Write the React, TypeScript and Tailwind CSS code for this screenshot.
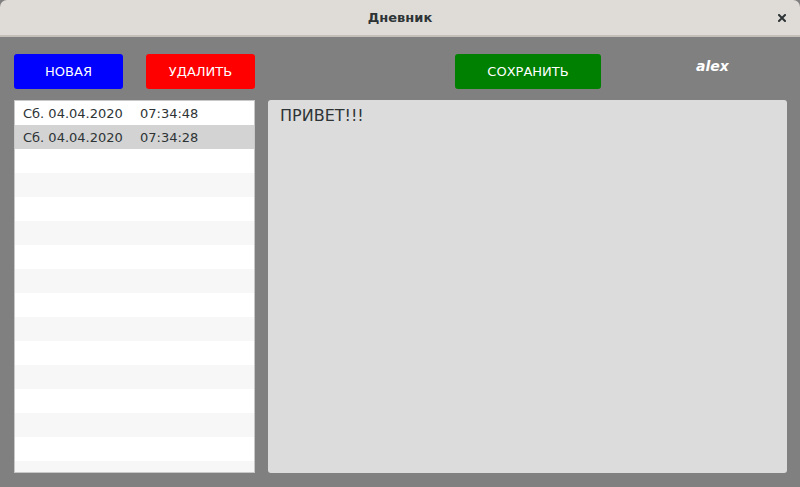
import { useState } from "react";

const entries = [
  { date: "Сб. 04.04.2020", time: "07:34:48" },
  { date: "Сб. 04.04.2020", time: "07:34:28" },
];

const App = () => {
  const [selected, setSelected] = useState(1);
  const [text, setText] = useState("ПРИВЕТ!!!");

  // empty rows to fill the list like the GTK tree view does
  const fillers = Array.from({ length: 14 }, (_, i) => i);

  return (
    <div
      className="w-[800px] h-[487px] flex flex-col bg-[#808080] overflow-hidden"
      style={{ fontFamily: '"DejaVu Sans", sans-serif' }}
    >
      {/* Title bar */}
      <div className="h-[37px] shrink-0 flex items-center justify-center relative bg-[#dfdcd8] border-b-2 border-[#c4bfb8] rounded-t-[7px]">
        <span className="text-[13px] font-bold text-[#2e3436] mt-[1px]">Дневник</span>
        <svg
          className="absolute right-[14px] top-[14px]"
          width="8"
          height="8"
          viewBox="0 0 8 8"
        >
          <path d="M1 1 L7 7 M7 1 L1 7" stroke="#2e3436" strokeWidth="2" strokeLinecap="square" />
        </svg>
      </div>

      {/* Toolbar */}
      <div className="h-[63px] shrink-0 flex items-start pt-[17px] pl-[14px]">
        <button className="w-[109px] h-[35px] rounded-[3px] bg-[#0000ff] text-white text-[13px]">
          НОВАЯ
        </button>
        <button className="ml-[23px] w-[109px] h-[35px] rounded-[3px] bg-[#ff0000] text-white text-[13px]">
          УДАЛИТЬ
        </button>
        <button className="ml-[200px] w-[146px] h-[35px] rounded-[3px] bg-[#008000] text-white text-[13px]">
          СОХРАНИТЬ
        </button>
        <span className="ml-[95px] mt-[2px] text-[14px] font-bold italic text-white">alex</span>
      </div>

      {/* Content */}
      <div className="flex-1 min-h-0 flex pl-[14px] pr-[13px] pb-[14px] gap-[13px]">
        <div className="w-[241px] min-h-0 border border-[#c8c8c8] bg-white overflow-hidden">
          {entries.map((e, i) => (
            <div
              key={i}
              onClick={() => setSelected(i)}
              className={`h-[24px] flex items-center pl-[8px] pt-[1px] text-[13px] text-[#2e3436] ${
                selected === i ? "bg-[#d3d3d3]" : i % 2 === 0 ? "bg-white" : "bg-[#f7f7f7]"
              }`}
            >
              <span className="w-[117px]">{e.date}</span>
              <span>{e.time}</span>
            </div>
          ))}
          {fillers.map((i) => (
            <div key={i} className={`h-[24px] ${i % 2 === 0 ? "bg-white" : "bg-[#f7f7f7]"}`} />
          ))}
        </div>
        <textarea
          value={text}
          onChange={(e) => setText(e.target.value)}
          className="flex-1 min-h-0 resize-none rounded-[3px] bg-[#dcdcdc] px-[12px] py-[6px] text-[16px] leading-[20px] text-[#2e3436] outline-none"
          style={{ fontFamily: '"DejaVu Sans", sans-serif' }}
        />
      </div>
    </div>
  );
};

export default App;
